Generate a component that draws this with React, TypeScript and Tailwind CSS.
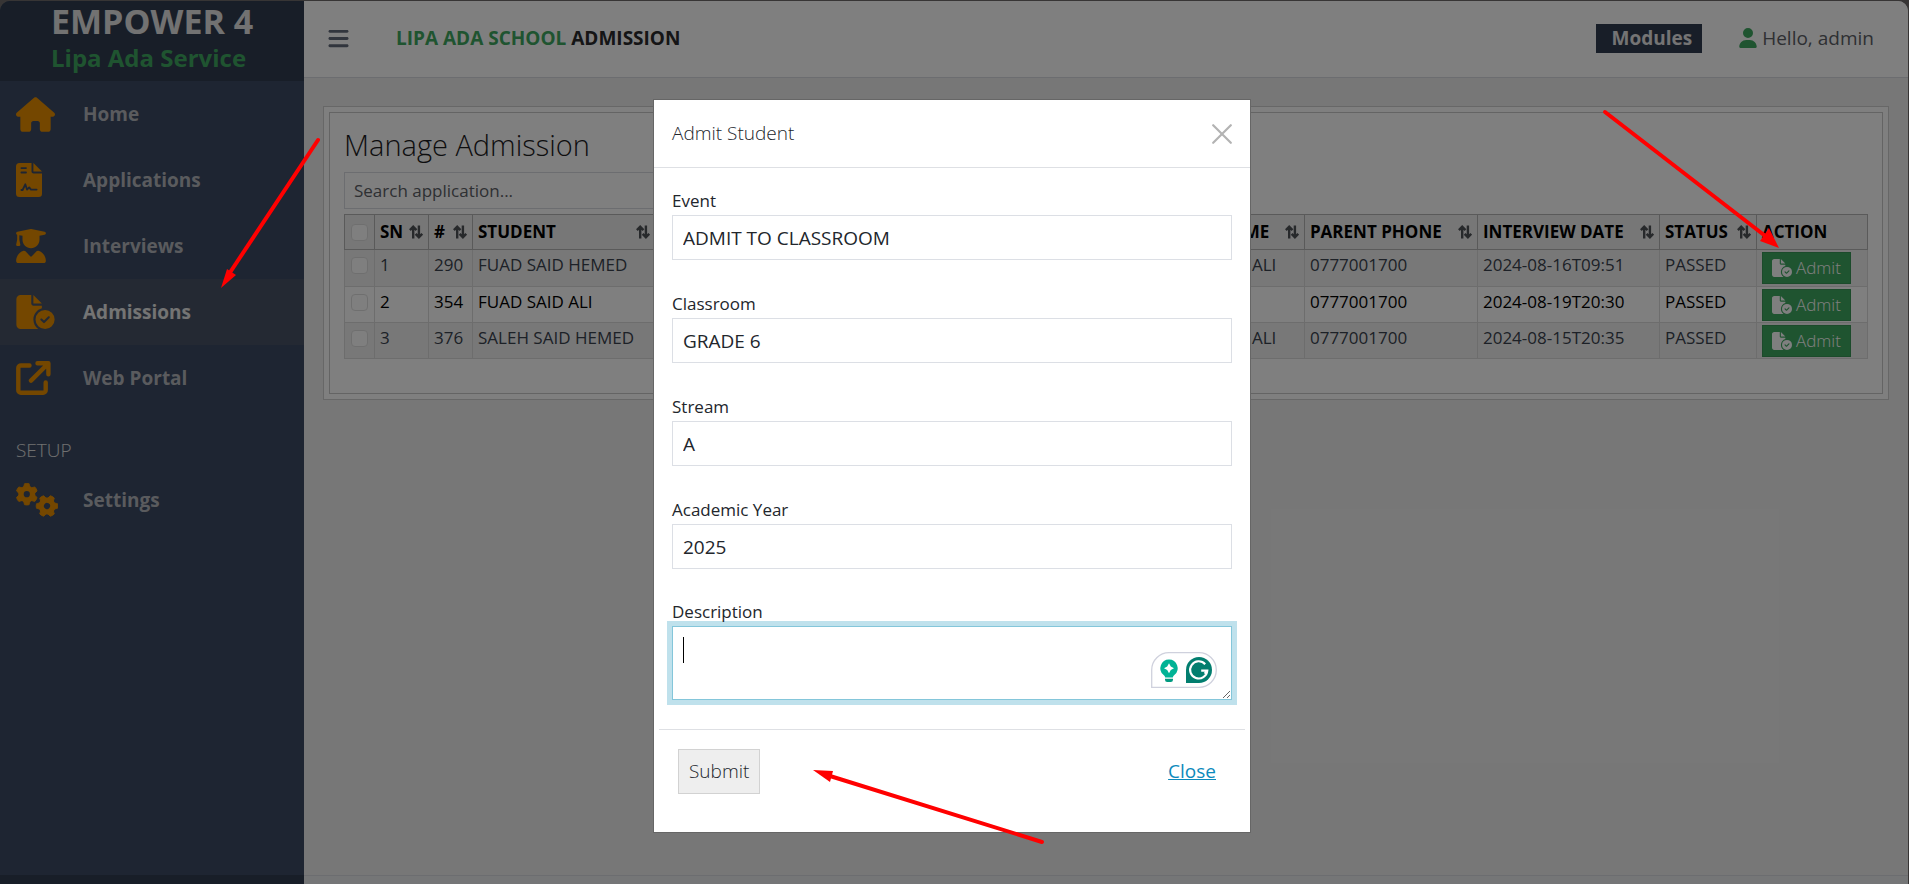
import type { IconType } from 'react-icons';
import {
  FaHouse,
  FaUserGraduate,
  FaFileCircleCheck,
  FaUser,
  FaBars,
} from 'react-icons/fa6';

function SignatureFileIcon({ className }: { className?: string }) {
  return (
    <svg viewBox="0 0 26 34" className={className} aria-hidden="true">
      <path
        fill="currentColor"
        fillRule="evenodd"
        d="M3.5 0H15.5V8A2.2 2.2 0 0 0 17.7 10.4H26V30.7A3.3 3.3 0 0 1 22.7 34H3.5A3.5 3.5 0 0 1 0 30.5V3.5A3.5 3.5 0 0 1 3.5 0ZM5.4 4.2A.8.8 0 0 0 5.4 6H10A.8.8 0 0 0 10 4.2ZM5.4 8.6A.8.8 0 0 0 5.4 10.4H10A.8.8 0 0 0 10 8.6Z"
      />
      <path fill="currentColor" d="M17.4 0 26 8.6H17.4Z" />
      <path
        d="M5.4 27H6.6L9.3 21.3L11 26.6L13.2 24.4L15 26.6H20.6"
        fill="none"
        stroke="#3c4b64"
        strokeWidth="1.8"
        strokeLinecap="round"
        strokeLinejoin="round"
      />
    </svg>
  );
}

function ExternalIcon({ className }: { className?: string }) {
  return (
    <svg viewBox="0 0 35 34" className={className} aria-hidden="true" fill="none" stroke="currentColor" strokeWidth="4.4" strokeLinecap="round" strokeLinejoin="round">
      <path d="M13.5 4.5H5A2.6 2.6 0 0 0 2.3 7V29A2.6 2.6 0 0 0 5 31.7H27A2.6 2.6 0 0 0 29.7 29V21.5" />
      <path d="M21.5 2.3H32.4V13.2M32 2.7 15 19.6" />
    </svg>
  );
}

const gearTeeth = [0, 60, 120, 180, 240, 300];

function Gear({ cx, cy, turn }: { cx: number; cy: number; turn: number }) {
  return (
    <g transform={`translate(${cx} ${cy}) rotate(${turn})`}>
      <circle r="5.8" fill="none" stroke="currentColor" strokeWidth="5.4" />
      {gearTeeth.map((a) => (
        <path key={a} transform={`rotate(${a})`} d="M-3.2 -7L-2.3 -10.5Q0 -11.2 2.3 -10.5L3.2 -7Z" fill="currentColor" stroke="currentColor" strokeWidth="0.8" strokeLinejoin="round" />
      ))}
    </g>
  );
}

function GearsIcon({ className }: { className?: string }) {
  return (
    <svg viewBox="0 0 42 34" className={className} aria-hidden="true">
      <Gear cx={10.8} cy={11.2} turn={0} />
      <Gear cx={31} cy={23} turn={30} />
    </svg>
  );
}

function SortIcon() {
  return (
    <svg viewBox="0 0 14 14" className="size-[14px] shrink-0 text-[#4f5257]" aria-hidden="true" fill="none" stroke="currentColor" strokeWidth="2.4">
      <path d="M4.2 13.5V2M.9 5.2 4.2 1.8 7.5 5.2" />
      <path d="M9.9 .5V12M6.6 8.8 9.9 12.2 13.2 8.8" />
    </svg>
  );
}

type NavItem = { label: string; icon: IconType | typeof SignatureFileIcon; size: string; active?: boolean };

const nav: NavItem[] = [
  { label: 'Home', icon: FaHouse, size: 'h-[35px] w-[39px]' },
  { label: 'Applications', icon: SignatureFileIcon, size: 'h-[34px] w-[26px]' },
  { label: 'Interviews', icon: FaUserGraduate, size: 'h-[34px] w-[30px]' },
  { label: 'Admissions', icon: FaFileCircleCheck, size: 'h-[34px] w-[39px]', active: true },
  { label: 'Web Portal', icon: ExternalIcon, size: 'h-[34px] w-[35px]' },
];

function NavLink({ item }: { item: NavItem }) {
  const Icon = item.icon;
  return (
    <a
      href="#"
      className={`flex h-[66px] items-center px-4 text-[19px] font-bold ${item.active ? 'bg-[#485366] text-[#e8e8e8]' : 'text-[#b4b7bc]'}`}
    >
      <span className="flex w-[67px] items-center text-[#e88e00]">
        <Icon className={item.size} />
      </span>
      {item.label}
    </a>
  );
}

const columns = [
  { label: 'SN', width: 'w-[54px]' },
  { label: '#', width: 'w-[44px]' },
  { label: 'STUDENT', width: 'w-[183px]' },
  { label: 'CLASS', width: '' },
  { label: 'PARENT NAME', width: 'w-[163px]' },
  { label: 'PARENT PHONE', width: 'w-[173px]' },
  { label: 'INTERVIEW DATE', width: 'w-[182px]' },
  { label: 'STATUS', width: 'w-[97px]' },
];

const rows = [
  ['1', '290', 'FUAD SAID HEMED', 'GRADE 6', 'SAID HEMED ALI', '0777001700', '2024-08-16T09:51', 'PASSED'],
  ['2', '354', 'FUAD SAID ALI', 'GRADE 6', 'SAID ALI', '0777001700', '2024-08-19T20:30', 'PASSED'],
  ['3', '376', 'SALEH SAID HEMED', 'GRADE 6', 'SAID HEMED ALI', '0777001700', '2024-08-15T20:35', 'PASSED'],
];

const checkbox = 'block size-[17px] appearance-none rounded-[4px] border border-[#dfdfdf] bg-white';

const fields = [
  { id: 'event', label: 'Event', value: 'ADMIT TO CLASSROOM' },
  { id: 'classroom', label: 'Classroom', value: 'GRADE 6' },
  { id: 'stream', label: 'Stream', value: 'A' },
  { id: 'year', label: 'Academic Year', value: '2025' },
];

function Sidebar() {
  return (
    <aside className="flex w-[304px] shrink-0 flex-col rounded-tl-[10px] bg-[#3c4b64]">
      <div className="h-20 rounded-tl-[10px] bg-[#303c50] pl-[51px] font-bold">
        <div className="text-[34px] leading-[40px] text-[#e4e4e4]">EMPOWER 4</div>
        <div className="text-[24px] leading-[34px] text-[#3fa861]">Lipa Ada Service</div>
      </div>
      <nav className="flex grow flex-col">
        {nav.map((item) => (
          <NavLink key={item.label} item={item} />
        ))}
        <div className="mt-[21px] h-[35px] px-4 text-[19px] leading-[36px] font-light text-[#e0e0e0]">SETUP</div>
        <NavLink item={{ label: 'Settings', icon: GearsIcon, size: 'h-[34px] w-[42px]' }} />
      </nav>
      <div className="h-[9px] bg-[#303c50]" />
    </aside>
  );
}

function TopBar() {
  return (
    <header className="flex h-[77px] shrink-0 items-center rounded-tr-[10px] border-b border-[#d8dbe0] bg-white pr-[34px] pb-[2px] pl-[23px] text-[19px]">
      <button type="button" aria-label="Toggle menu" className="text-[#626a7a]">
        <FaBars className="size-[23px]" />
      </button>
      <h1 className="ml-[46px] font-bold text-[#2a2a2c]">
        <span className="text-[#3fa861]">LIPA ADA SCHOOL</span> ADMISSION
      </h1>
      <a href="#" className="ml-auto flex h-[29px] items-center bg-[#303c50] pr-[10px] pl-[15px] font-bold text-[#e8e8e8]">
        Modules
      </a>
      <a href="#" className="ml-[37px] flex items-center gap-[5px] text-[#5c6066]">
        <FaUser className="h-5 w-[18px] text-[#3fa861]" />
        Hello, admin
      </a>
    </header>
  );
}

function AdmissionTable() {
  return (
    <table className="mt-[5px] w-full table-fixed border-collapse text-[17px] leading-[24px] text-[#3a434e]">
      <thead>
        <tr className="h-[35px] bg-[#efefef] text-left text-black">
          <th className="w-[30px] border border-[#b4b4b4] px-[6px]">
            <input type="checkbox" aria-label="Select all" className={checkbox} />
          </th>
          {columns.map((c) => (
            <th key={c.label} className={`${c.width} border border-[#b4b4b4] px-[5px] font-bold whitespace-nowrap`}>
              <span className="flex items-center justify-between">
                {c.label}
                <SortIcon />
              </span>
            </th>
          ))}
          <th className="w-[111px] border border-[#b4b4b4] px-[5px] font-bold">ACTION</th>
        </tr>
      </thead>
      <tbody>
        {rows.map((r, i) => (
          <tr key={r[1]} className={`h-[36px] align-top first:h-[37px] ${i % 2 ? 'text-black' : 'bg-[#f1f1f1]'}`}>
            <td className="border border-[#dadada] px-[6px] pt-[7px]">
              <input type="checkbox" aria-label={`Select ${r[2]}`} className={checkbox} />
            </td>
            {r.map((cell, j) => (
              <td key={j} className="border border-[#dadada] px-[5px] pt-[3px] whitespace-nowrap">
                {cell}
              </td>
            ))}
            <td className="border border-[#dadada] px-[5px] pt-[2px]">
              <button type="button" className="flex h-[32px] w-[89px] items-center gap-1 border border-[#389657] bg-[#3fa861] pl-[9px] font-light text-white">
                <FaFileCircleCheck className="h-[18px] w-5" />
                Admit
              </button>
            </td>
          </tr>
        ))}
      </tbody>
    </table>
  );
}

function AssistantBadge() {
  return (
    <svg viewBox="0 0 66 36" className="h-9 w-[66px]" aria-hidden="true">
      <path d="M.7 35.3V18A17.3 17.3 0 0 1 18 .7H48A17.3 17.3 0 0 1 48 35.3Z" fill="#fff" stroke="#cfd1dd" strokeWidth="1.3" />
      <path d="M18 7.5A8.7 8.7 0 0 1 23.6 22.8Q22 24 21.8 25.5H14.2Q14 24 12.4 22.8A8.7 8.7 0 0 1 18 7.5Z" fill="#00b395" />
      <path d="M18 11.2 19.8 14.4 23 16.2 19.8 18 18 21.2 16.2 18 13 16.2 16.2 14.4Z" fill="#fff" />
      <path d="M14 26.8H22V27.8A2.2 2.2 0 0 1 19.8 30H16.2A2.2 2.2 0 0 1 14 27.8Z" fill="#009a80" />
      <path d="M35 31V18A13 13 0 1 1 48 31Z" fill="#027e6f" />
      <path d="M54.2 12.2A8.6 8.6 0 1 0 56.3 18.6H50.2M56.2 18.6 53.6 21.6" fill="none" stroke="#fff" strokeWidth="2.1" />
    </svg>
  );
}

const labelStyle = 'relative z-10 pb-[3px] text-[17px] leading-[22px]';

function AdmitDialog() {
  return (
    <section role="dialog" aria-label="Admit Student" className="h-fit w-[598px] border border-[#666] bg-white text-[#22262c]">
      <header className="flex h-[68px] items-center justify-between border-b border-[#dee0e4] px-[18px]">
        <h2 className="text-[19px] font-light">Admit Student</h2>
        <button type="button" aria-label="Close dialog">
          <svg viewBox="0 0 20 20" className="size-5" fill="none" stroke="#b3b3b3" strokeWidth="2.2" strokeLinecap="round">
            <path d="M1.2 1.2 18.8 18.8M18.8 1.2 1.2 18.8" />
          </svg>
        </button>
      </header>
      <form className="px-[18px] pt-[22px]">
        {fields.map((f) => (
          <div key={f.id} className="mb-[33px] flex flex-col last-of-type:mb-0 nth-4:mb-8">
            <label htmlFor={f.id} className={labelStyle}>{f.label}</label>
            <input id={f.id} defaultValue={f.value} className="h-[45px] border border-[#dcdfe5] px-[10px] text-[19px] outline-none" />
          </div>
        ))}
        <div className="relative flex flex-col">
          <label htmlFor="description" className={labelStyle}>Description</label>
          <textarea id="description" className="block h-[74px] resize-y border border-[#84c6da] px-[10px] py-2 text-[19px] shadow-[0_0_0_5px_#bfe1ec] outline-none" />
          <span className="absolute top-[36px] left-[11px] h-[26px] w-px bg-black" />
          <span className="absolute right-[15px] bottom-[12px]"><AssistantBadge /></span>
        </div>
      </form>
      <footer className="mx-[5px] mt-[29px] flex h-[103px] items-start justify-between border-t border-[#dee0e4] px-[19px] pt-[19px] text-[19px]">
        <button type="submit" className="h-[45px] border border-[#d2d2d2] bg-[#eee] px-[10px] font-light text-[#22262c]">Submit</button>
        <a href="#" className="mr-[10px] leading-[45px] text-[#0d8abc] underline">Close</a>
      </footer>
    </section>
  );
}

function PointerArrow({ className, w, h, line, head }: { className: string; w: number; h: number; line: string; head: string }) {
  return (
    <svg viewBox={`0 0 ${w} ${h}`} width={w} height={h} className={`pointer-events-none absolute ${className}`} aria-hidden="true">
      <path d={line} stroke="#f00" strokeWidth="4" strokeLinecap="round" fill="none" />
      <path d={head} fill="#f00" />
    </svg>
  );
}

export default function App() {
  return (
    <div className="relative flex min-h-screen bg-[#6e6b6a] pt-px pr-px font-['Open_Sans',sans-serif]">
      <Sidebar />
      <div className="flex grow flex-col rounded-tr-[10px] bg-[#efefef]">
        <TopBar />
        <main className="grow px-[19px] pt-[28px]">
          <div className="border border-[#cfcfcf] bg-white p-[5px]">
            <div className="border border-[#c8c8c8] px-[14px] pt-[10px] pb-[34px]">
              <h2 className="h-[49px] text-[29px] leading-[44px] font-light text-[#1c1c1e]">Manage Admission</h2>
              <input
                type="search"
                aria-label="Search application"
                placeholder="Search application..."
                className="block h-[37px] w-[600px] border border-[#d8dbe0] px-[9px] text-[17px] placeholder:text-[#5c6066]"
              />
              <AdmissionTable />
            </div>
          </div>
        </main>
        <footer className="h-[9px] border-t border-[#d8dbe0] bg-[#ebedef]" />
      </div>
      <div className="absolute inset-0 flex justify-center bg-black/50 pt-[99px] pr-[5px]">
        <AdmitDialog />
      </div>
      <PointerArrow className="top-[135px] left-[215px]" w={110} h={160} line="M103 5 14 139" head="M6 153 12 134 21 140Z" />
      <PointerArrow className="top-[106px] left-[1599px]" w={190} h={150} line="M6 6 165 129" head="M180 142 161 135 170 122Z" />
      <PointerArrow className="top-[760px] left-[808px]" w={240} h={90} line="M234 82 22 16" head="M5 10 25 11 22 22Z" />
    </div>
  );
}
